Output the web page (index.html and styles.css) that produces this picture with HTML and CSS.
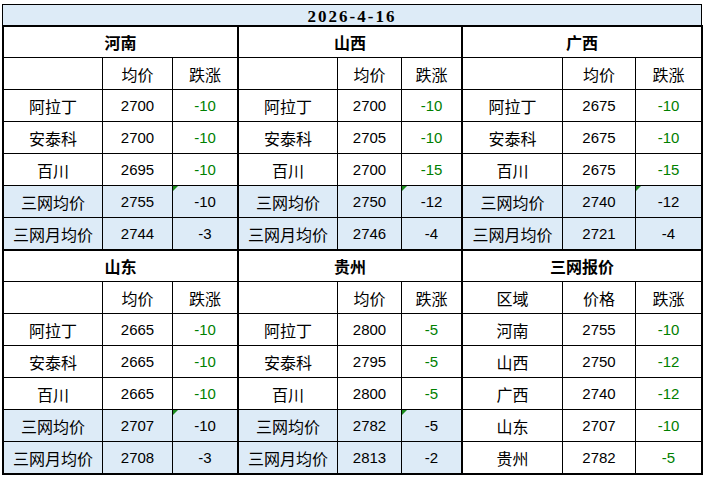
FILE: index.html
```html
<!DOCTYPE html>
<html lang="zh">
<head>
<meta charset="utf-8">
<title>2026-4-16 三网报价</title>
<link rel="stylesheet" href="styles.css">
</head>
<body>
<div class="sheet">
  <div class="title">2026-4-16</div>
  <div class="grid">
    <section class="block b1">
      <div class="bh">河南</div>
      <div class="c"></div><div class="c">均价</div><div class="c">跌涨</div>
      <div class="c">阿拉丁</div><div class="c num">2700</div><div class="c num up">-10</div>
      <div class="c">安泰科</div><div class="c num">2700</div><div class="c num up">-10</div>
      <div class="c">百川</div><div class="c num">2695</div><div class="c num up">-10</div>
      <div class="c avg">三网均价</div><div class="c avg num">2755</div><div class="c avg num flag">-10</div>
      <div class="c avg">三网月均价</div><div class="c avg num">2744</div><div class="c avg num">-3</div>
    </section>
    <section class="block b2">
      <div class="bh">山西</div>
      <div class="c"></div><div class="c">均价</div><div class="c">跌涨</div>
      <div class="c">阿拉丁</div><div class="c num">2700</div><div class="c num up">-10</div>
      <div class="c">安泰科</div><div class="c num">2705</div><div class="c num up">-10</div>
      <div class="c">百川</div><div class="c num">2700</div><div class="c num up">-15</div>
      <div class="c avg">三网均价</div><div class="c avg num">2750</div><div class="c avg num flag">-12</div>
      <div class="c avg">三网月均价</div><div class="c avg num">2746</div><div class="c avg num">-4</div>
    </section>
    <section class="block b3">
      <div class="bh">广西</div>
      <div class="c"></div><div class="c">均价</div><div class="c">跌涨</div>
      <div class="c">阿拉丁</div><div class="c num">2675</div><div class="c num up">-10</div>
      <div class="c">安泰科</div><div class="c num">2675</div><div class="c num up">-10</div>
      <div class="c">百川</div><div class="c num">2675</div><div class="c num up">-15</div>
      <div class="c avg">三网均价</div><div class="c avg num">2740</div><div class="c avg num flag">-12</div>
      <div class="c avg">三网月均价</div><div class="c avg num">2721</div><div class="c avg num">-4</div>
    </section>
    <section class="block b1">
      <div class="bh">山东</div>
      <div class="c"></div><div class="c">均价</div><div class="c">跌涨</div>
      <div class="c">阿拉丁</div><div class="c num">2665</div><div class="c num up">-10</div>
      <div class="c">安泰科</div><div class="c num">2665</div><div class="c num up">-10</div>
      <div class="c">百川</div><div class="c num">2665</div><div class="c num up">-10</div>
      <div class="c avg">三网均价</div><div class="c avg num">2707</div><div class="c avg num flag">-10</div>
      <div class="c avg">三网月均价</div><div class="c avg num">2708</div><div class="c avg num">-3</div>
    </section>
    <section class="block b2">
      <div class="bh">贵州</div>
      <div class="c"></div><div class="c">均价</div><div class="c">跌涨</div>
      <div class="c">阿拉丁</div><div class="c num">2800</div><div class="c num up">-5</div>
      <div class="c">安泰科</div><div class="c num">2795</div><div class="c num up">-5</div>
      <div class="c">百川</div><div class="c num">2800</div><div class="c num up">-5</div>
      <div class="c avg">三网均价</div><div class="c avg num">2782</div><div class="c avg num flag">-5</div>
      <div class="c avg">三网月均价</div><div class="c avg num">2813</div><div class="c avg num">-2</div>
    </section>
    <section class="block b3">
      <div class="bh">三网报价</div>
      <div class="c">区域</div><div class="c">价格</div><div class="c">跌涨</div>
      <div class="c">河南</div><div class="c num">2755</div><div class="c num up">-10</div>
      <div class="c">山西</div><div class="c num">2750</div><div class="c num up">-12</div>
      <div class="c">广西</div><div class="c num">2740</div><div class="c num up">-12</div>
      <div class="c">山东</div><div class="c num">2707</div><div class="c num up">-10</div>
      <div class="c">贵州</div><div class="c num">2782</div><div class="c num up">-5</div>
    </section>
  </div>
</div>
</body>
</html>
```

FILE: styles.css
```css
html, body {
  margin: 0;
  padding: 0;
  background: #fff;
}

body {
  font-family: "Liberation Sans", "Noto Sans CJK SC", sans-serif;
  color: #000;
}

.sheet {
  margin: 4px 0 0 2px;
  width: 701px;
}

.title {
  box-sizing: border-box;
  width: 700px;
  height: 21px;
  border: 1px solid #000;
  border-bottom: none;
  background: #ddebf7;
  display: flex;
  align-items: center;
  justify-content: center;
  padding-top: 3px;
  font-family: "Liberation Serif", serif;
  font-weight: bold;
  font-size: 17px;
  letter-spacing: 2px;
  line-height: 1;
}

.grid {
  box-sizing: border-box;
  width: 701px;
  display: grid;
  grid-template-columns: 233px 222px 238px;
  grid-template-rows: 222px 222px;
  gap: 2px;
  padding: 2px;
  background: #000;
}

.block {
  display: grid;
  grid-template-rows: 30px repeat(6, 31px);
  gap: 1px;
  background: #000;
}

.b1 { grid-template-columns: 98px 69px 64px; }
.b2 { grid-template-columns: 98px 63px 59px; }
.b3 { grid-template-columns: 99px 72px 65px; }

.bh {
  grid-column: 1 / -1;
  background: #fff;
  display: flex;
  align-items: center;
  justify-content: center;
  font-family: "Noto Sans CJK SC", sans-serif;
  font-weight: bold;
  font-size: 16px;
}

.c {
  background: #fff;
  display: flex;
  align-items: center;
  justify-content: center;
  font-family: "Noto Sans CJK SC", sans-serif;
  font-size: 16px;
  line-height: 1;
}

.num {
  font-family: "Liberation Sans", sans-serif;
  font-size: 15px;
}

.up {
  color: #008000;
}

.avg {
  background: #ddebf7;
}

.flag {
  position: relative;
}

.flag::before {
  content: "";
  position: absolute;
  top: 0;
  left: 0;
  border-top: 5px solid #1a8a1a;
  border-right: 5px solid transparent;
}
```
